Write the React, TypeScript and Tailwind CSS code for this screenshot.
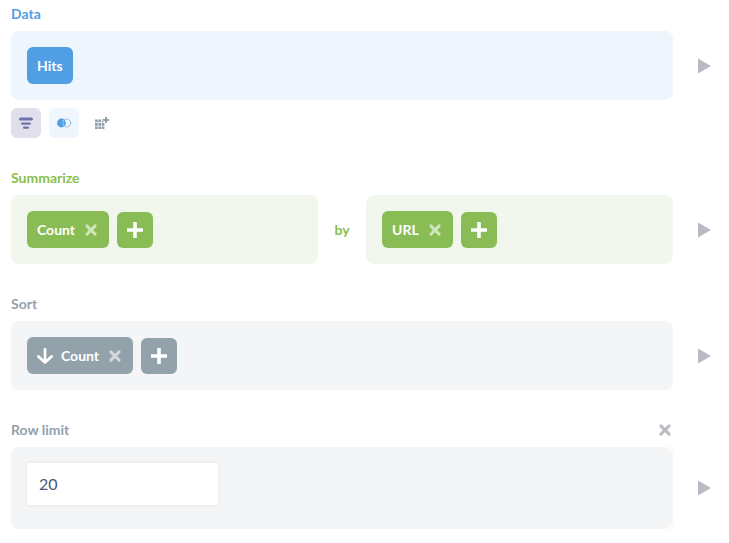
import { useState, type ReactNode } from "react";

function CrossIcon() {
  return (
    <svg width="16" height="16" viewBox="0 0 16 16" fill="none" stroke="currentColor" strokeWidth="3" strokeLinecap="round" aria-hidden="true">
      <path d="M3.9 3.9l8.2 8.2M12.1 3.9l-8.2 8.2" />
    </svg>
  );
}

function PlusIcon() {
  return (
    <svg width="16" height="16" viewBox="0 0 16 16" fill="currentColor" aria-hidden="true">
      <path d="M6.2 0h3.6v6.2H16v3.6H9.8V16H6.2V9.8H0V6.2h6.2z" />
    </svg>
  );
}

function ArrowDownIcon() {
  return (
    <svg width="16" height="16" viewBox="0 0 16 16" fill="none" stroke="currentColor" strokeWidth="2.7" strokeLinecap="round" strokeLinejoin="round" aria-hidden="true">
      <path d="M8 1.2v13.2M1.4 8.4L8 14.6l6.6-6.2" />
    </svg>
  );
}

function FilterIcon() {
  return (
    <svg width="16" height="16" viewBox="0 0 16 16" fill="#7172ad" aria-hidden="true">
      <rect x="1" y="2.6" width="14" height="3" rx="1.5" />
      <rect x="3" y="7.5" width="10" height="2.2" rx="1.1" />
      <rect x="5" y="11.6" width="6" height="2.2" rx="1.1" />
    </svg>
  );
}

function JoinIcon() {
  return (
    <svg width="16" height="16" viewBox="0 0 16 16" fill="none" aria-hidden="true">
      <circle cx="5.4" cy="8" r="4.4" fill="#509ee3" />
      <circle cx="10.8" cy="8" r="3.9" stroke="#509ee3" strokeWidth="0.9" strokeDasharray="1.6 0.6" />
      <path d="M7.2 5.2v5.6" stroke="#f0f6fe" strokeWidth="0.8" strokeDasharray="1.2 0.9" />
    </svg>
  );
}

function CustomColumnIcon() {
  return (
    <svg width="16" height="16" viewBox="0 0 16 16" fill="#93a1ab" aria-hidden="true">
      <path d="M1 4.6h2.8v2.7H1zM4.4 4.6h2.8v2.7H4.4zM1 8h2.8v2.7H1zM4.4 8h2.8v2.7H4.4zM7.8 8h2.6v2.7H7.8zM1 11.4h2.8v2.7H1zM4.4 11.4h2.8v2.7H4.4zM7.8 11.4h2.6v2.7H7.8zM7.8 6.2h1.6v1.2H7.8z" />
      <path d="M11 2h2v2h2v2h-2v2h-2V6H8.6V4H11z" />
    </svg>
  );
}

function Chip({ color, label, icon, removable = true }: { color: string; label: string; icon?: ReactNode; removable?: boolean }) {
  return (
    <div className={`flex h-[37px] items-center rounded-md px-2.5 text-white ${color}`}>
      <button type="button" className="flex items-center gap-2">
        {icon}
        {label}
      </button>
      {removable && (
        <button type="button" aria-label={`Remove ${label}`} className="ml-2 opacity-60">
          <CrossIcon />
        </button>
      )}
    </div>
  );
}

function AddButton({ color, label }: { color: string; label: string }) {
  return (
    <button type="button" aria-label={label} className={`flex size-9 items-center justify-center rounded-md text-white ${color}`}>
      <PlusIcon />
    </button>
  );
}

function Panel({ color, children }: { color: string; children: ReactNode }) {
  return <div className={`flex min-w-0 flex-1 items-end gap-2 rounded-lg p-4 ${color}`}>{children}</div>;
}

function Step({ title, color, onRemove, footer, children }: { title: string; color: string; onRemove?: () => void; footer?: ReactNode; children: ReactNode }) {
  return (
    <section>
      <div className="mr-14 mb-[7px] flex h-5 items-center justify-between">
        <h2 className={color}>{title}</h2>
        {onRemove && (
          <button type="button" aria-label={`Remove ${title}`} onClick={onRemove} className="text-[#b8bbc3]">
            <CrossIcon />
          </button>
        )}
      </div>
      <div className="flex items-center pr-2.5">
        <div className="flex min-w-0 flex-1 items-center">{children}</div>
        <button type="button" aria-label={`Preview ${title}`} className="ml-4 flex size-[30px] items-center justify-center text-[#b8bbc3]">
          <svg width="16" height="16" viewBox="0 0 16 16" fill="currentColor" aria-hidden="true">
            <path d="M2 0.5L15 8 2 15.5z" />
          </svg>
        </button>
      </div>
      {footer}
    </section>
  );
}

export default function App() {
  const [limit, setLimit] = useState("20");

  return (
    <main className="flex flex-col gap-[30px] bg-white pt-1 pb-3.5 pl-[11px] font-['Lato',sans-serif] text-sm leading-5 font-bold">
      <Step
        title="Data"
        color="text-[#509ee3]"
        footer={
          <div className="mt-2 flex gap-2">
            <button type="button" aria-label="Filter" className="flex size-[30px] items-center justify-center rounded-md bg-[#e0dfeb]">
              <FilterIcon />
            </button>
            <button type="button" aria-label="Join data" className="flex size-[30px] items-center justify-center rounded-md bg-[#f0f6fe]">
              <JoinIcon />
            </button>
            <button type="button" aria-label="Custom column" className="flex size-[30px] items-center justify-center rounded-md">
              <CustomColumnIcon />
            </button>
          </div>
        }
      >
        <Panel color="bg-[#eef5fd]">
          <Chip color="bg-[#509ee3]" label="Hits" removable={false} />
        </Panel>
      </Step>

      <Step title="Summarize" color="text-[#88bf4d]">
        <Panel color="bg-[#f2f7ee]">
          <Chip color="bg-[#8abc55]" label="Count" />
          <AddButton color="bg-[#8abc55]" label="Add a metric" />
        </Panel>
        <span className="w-12 text-center text-[#88bf4d]">by</span>
        <Panel color="bg-[#f2f7ee]">
          <Chip color="bg-[#8abc55]" label="URL" />
          <AddButton color="bg-[#8abc55]" label="Add a grouping" />
        </Panel>
      </Step>

      <Step title="Sort" color="text-[#93a1ab]">
        <Panel color="bg-[#f3f5f7]">
          <Chip color="bg-[#93a1ab]" label="Count" icon={<ArrowDownIcon />} />
          <AddButton color="bg-[#93a1ab]" label="Add a sort" />
        </Panel>
      </Step>

      <Step title="Row limit" color="text-[#93a1ab]" onRemove={() => setLimit("")}>
        <Panel color="bg-[#f3f5f7]">
          <input
            type="text"
            inputMode="numeric"
            aria-label="Row limit"
            value={limit}
            onChange={(e) => setLimit(e.target.value)}
            className="mb-2 h-[42px] w-[191px] rounded-xs bg-white px-3 pb-0.5 text-base font-normal text-[#4c5773] ring-2 ring-[#eeeff1] outline-none"
          />
        </Panel>
      </Step>
    </main>
  );
}
